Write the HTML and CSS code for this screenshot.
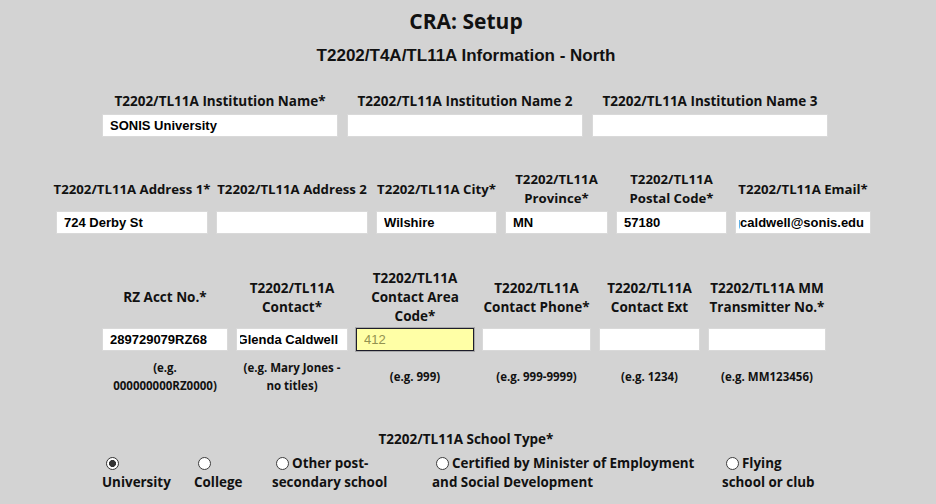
FILE: index.html
```html
<!DOCTYPE html>
<html lang="en">
<head>
<meta charset="utf-8">
<title>CRA: Setup</title>
<link rel="stylesheet" href="styles.css">
</head>
<body>
<h1 class="title">CRA: Setup</h1>
<h2 class="subtitle">T2202/T4A/TL11A Information - North</h2>

<form class="form">
  <div class="row row-1">
    <label class="lbl">T2202/TL11A Institution Name*</label>
    <label class="lbl">T2202/TL11A Institution Name 2</label>
    <label class="lbl">T2202/TL11A Institution Name 3</label>
    <input class="inp" type="text" value="SONIS University">
    <input class="inp" type="text" value="">
    <input class="inp" type="text" value="">
  </div>

  <div class="row row-2">
    <label class="lbl nowrap">T2202/TL11A Address 1*</label>
    <label class="lbl nowrap">T2202/TL11A Address 2</label>
    <label class="lbl nowrap">T2202/TL11A City*</label>
    <label class="lbl">T2202/TL11A<br>Province*</label>
    <label class="lbl">T2202/TL11A<br>Postal Code*</label>
    <label class="lbl nowrap">T2202/TL11A Email*</label>
    <input class="inp" type="text" value="724 Derby St">
    <input class="inp" type="text" value="">
    <input class="inp" type="text" value="Wilshire">
    <input class="inp" type="text" value="MN">
    <input class="inp" type="text" value="57180">
    <div class="inp fake"><div class="clip"><span class="email">gcaldwell@sonis.edu</span></div></div>
  </div>

  <div class="row row-3">
    <label class="lbl">RZ Acct No.*</label>
    <label class="lbl">T2202/TL11A<br>Contact*</label>
    <label class="lbl">T2202/TL11A<br>Contact Area<br>Code*</label>
    <label class="lbl">T2202/TL11A<br>Contact Phone*</label>
    <label class="lbl">T2202/TL11A<br>Contact Ext</label>
    <label class="lbl">T2202/TL11A MM<br>Transmitter No.*</label>
    <input class="inp" type="text" value="289729079RZ68">
    <div class="inp fake"><div class="clip"><span class="contact">Glenda Caldwell</span></div></div>
    <input class="inp focus" type="text" value="412">
    <input class="inp" type="text" value="">
    <input class="inp" type="text" value="">
    <input class="inp" type="text" value="">
    <div class="hint">(e.g.<br>000000000RZ0000)</div>
    <div class="hint">(e.g. Mary Jones -<br>no titles)</div>
    <div class="hint">(e.g. 999)</div>
    <div class="hint">(e.g. 999-9999)</div>
    <div class="hint">(e.g. 1234)</div>
    <div class="hint">(e.g. MM123456)</div>
  </div>

  <div class="school">
    <div class="lbl school-title">T2202/TL11A School Type*</div>
    <div class="options">
      <label class="opt"><input class="radio" type="radio" name="stype" checked><br>University</label>
      <label class="opt"><input class="radio" type="radio" name="stype"><br>College</label>
      <label class="opt"><input class="radio" type="radio" name="stype">Other post-<br>secondary school</label>
      <label class="opt"><input class="radio" type="radio" name="stype">Certified by Minister of Employment<br>and Social Development</label>
      <label class="opt"><input class="radio" type="radio" name="stype">Flying<br>school or club</label>
    </div>
  </div>
</form>
</body>
</html>
```
FILE: styles.css
```css
html, body {
  margin: 0;
  padding: 0;
  background: #d3d3d3;
  color: #111;
}
body {
  width: 936px;
  height: 504px;
  overflow: hidden;
  font-family: "Open Sans", Lato, "Liberation Sans", sans-serif;
}
.title {
  margin: 8px 0 0;
  font-size: 21px;
  line-height: 26px;
  font-weight: 700;
  text-align: center;
  padding-right: 4px;
}
.subtitle {
  margin: 12px 0 0;
  font-family: "Liberation Sans", Arial, sans-serif;
  font-size: 17px;
  line-height: 20px;
  font-weight: 700;
  text-align: center;
  padding-right: 4px;
}
.form {
  margin: 0;
}
.row {
  display: grid;
  grid-template-rows: auto 23px;
  align-items: center;
  row-gap: 3px;
}
.row-1 {
  margin: 26px 0 0 102px;
  grid-template-columns: 236px 236px 236px;
  column-gap: 9px;
}
.row-2 {
  margin: 33px 0 0 56px;
  grid-template-columns: 152px 152px 121px 103px 111px 136px;
  column-gap: 8px;
}
.row-3 {
  margin: 35px 0 0 102px;
  grid-template-columns: 126px 112px 118px 109px 101px 118px;
  grid-template-rows: auto 23px auto;
  column-gap: 8px;
  row-gap: 0;
}
.lbl {
  font-size: 13.5px;
  line-height: 19px;
  font-weight: 700;
  text-align: center;
  justify-self: center;
}
.row-2 .lbl {
  font-size: 13.2px;
}
.row-3 .lbl {
  margin-bottom: 2px;
}
.nowrap {
  white-space: nowrap;
}
.inp {
  box-sizing: border-box;
  width: 100%;
  height: 23px;
  margin: 0;
  padding: 0 7px;
  border: 1px solid #d9d9d9;
  background: #fff;
  font-family: "Liberation Sans", Arial, sans-serif;
  font-size: 13px;
  font-weight: 700;
  color: #000;
  outline: none;
}
.inp.focus {
  background: #ffffa6;
  border: 1px solid #1d1d2a;
  box-shadow: 0 0 0 1px #a9a9a9;
  color: #929250;
  font-weight: 400;
}
.fake {
  display: flex;
  align-items: center;
  padding: 0 3px;
}
.clip {
  flex: 1;
  overflow: hidden;
  display: flex;
  justify-content: flex-end;
  white-space: nowrap;
}
.clip span {
  flex: none;
}
.clip .email {
  padding-right: 3px;
}
.clip .contact {
  padding-right: 6px;
}
.hint {
  margin-top: 8px;
  font-size: 11.5px;
  line-height: 18px;
  font-weight: 700;
  text-align: center;
  align-self: center;
  white-space: nowrap;
}
.school {
  margin: 35px 0 0 102px;
  width: 728px;
}
.school-title {
  display: block;
  text-align: center;
}
.options {
  margin-top: 5px;
  display: grid;
  grid-template-columns: 92px 78px 160px 290px 108px;
}
.opt {
  font-size: 13.4px;
  line-height: 19px;
  font-weight: 700;
  white-space: nowrap;
}
.radio {
  appearance: none;
  -webkit-appearance: none;
  box-sizing: border-box;
  width: 13px;
  height: 13px;
  margin: 0 3px 0 4px;
  border: 1px solid #3c3c3c;
  border-radius: 50%;
  background: #fff;
  vertical-align: -2px;
}
.radio:checked {
  background: radial-gradient(circle, #333 0 3.2px, #fff 3.8px);
  border-color: #333;
}
```
